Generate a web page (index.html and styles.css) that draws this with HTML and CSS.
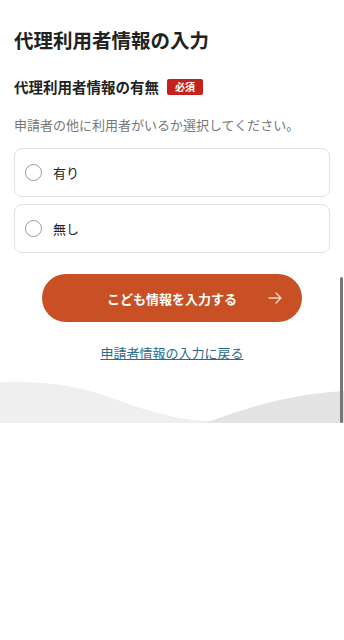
FILE: index.html
```html
<!DOCTYPE html>
<html lang="ja">
<head>
    <meta charset="UTF-8">
    <meta name="viewport" content="width=device-width, initial-scale=1.0">
    <title>代理利用者情報の入力</title>
    <link rel="stylesheet" href="styles.css">
</head>
<body>

    <main class="page">
        <h1 class="page-title">代理利用者情報の入力</h1>

        <section class="field">
            <h2 class="field-label">代理利用者情報の有無 <span class="badge">必須</span></h2>
            <p class="field-help">申請者の他に利用者がいるか選択してください。</p>

            <div class="options">
                <label class="option">
                    <input type="radio" name="proxy" value="yes">
                    <span class="radio"></span>
                    <span class="option-text">有り</span>
                </label>
                <label class="option">
                    <input type="radio" name="proxy" value="no">
                    <span class="radio"></span>
                    <span class="option-text">無し</span>
                </label>
            </div>
        </section>

        <div class="actions">
            <button class="primary">
                <span>こども情報を入力する</span>
                <svg class="arrow" width="14" height="12" viewBox="0 0 14 12" fill="none" stroke="currentColor" stroke-width="1.4" stroke-linecap="round" stroke-linejoin="round">
                    <path d="M1 6h12M8 1l5 5-5 5"/>
                </svg>
            </button>
            <a class="back-link" href="#">申請者情報の入力に戻る</a>
        </div>
    </main>

    <div class="wave">
        <svg width="344" height="42" viewBox="0 0 344 42" preserveAspectRatio="none">
            <path d="M0 1 C30 0 60 2 90 10 C130 22 160 38 210 40 L250 42 L0 42 Z" fill="#efefef"/>
            <path d="M205 42 C240 30 280 14 344 10 L344 42 Z" fill="#e3e3e3"/>
        </svg>
    </div>

    <div class="scrollbar"></div>

</body>
</html>
```

FILE: styles.css
```css
body {
    font-family: 'Noto Sans CJK JP', 'Noto Sans', sans-serif;
    margin: 0;
    padding: 0;
    background-color: #fff;
    color: #222;
}

.page {
    padding: 25px 14px 0;
}

.page-title {
    margin: 0;
    font-size: 19.5px;
    line-height: 30px;
    font-weight: bold;
    color: #222;
}

.field {
    margin-top: 20px;
}

.field-label {
    display: flex;
    align-items: center;
    gap: 8px;
    margin: 0;
    font-size: 14.5px;
    line-height: 24px;
    font-weight: bold;
}

.badge {
    background-color: #c5221f;
    color: #fff;
    font-size: 10px;
    line-height: 16px;
    padding: 0 8px;
    border-radius: 2px;
    font-weight: bold;
}

.field-help {
    margin: 16px 0 0;
    font-size: 13px;
    line-height: 20px;
    color: #777;
}

.options {
    display: flex;
    flex-direction: column;
    gap: 7px;
    margin-top: 13px;
}

.option {
    display: flex;
    align-items: center;
    height: 49px;
    box-sizing: border-box;
    padding: 0 10px;
    border: 1px solid #e2e2e2;
    border-radius: 8px;
    cursor: pointer;
}

.option input {
    display: none;
}

.radio {
    width: 17px;
    height: 17px;
    border: 1px solid #9a9a9a;
    border-radius: 50%;
    box-sizing: border-box;
    margin-right: 11px;
}

.option-text {
    font-size: 13px;
    color: #222;
}

.actions {
    display: flex;
    flex-direction: column;
    align-items: center;
    margin-top: 21px;
}

button.primary {
    position: relative;
    width: 260px;
    height: 48px;
    border: none;
    border-radius: 24px;
    background-color: #c94f25;
    color: #fff;
    font-family: inherit;
    font-size: 13px;
    font-weight: bold;
    cursor: pointer;
}

button.primary .arrow {
    position: absolute;
    right: 20px;
    top: 18px;
    color: #f6d6c9;
}

.back-link {
    margin-top: 21px;
    font-size: 13px;
    line-height: 20px;
    color: #2c6b88;
    text-decoration: underline;
}

.wave {
    margin-top: 18px;
    height: 42px;
    line-height: 0;
}

.scrollbar {
    position: absolute;
    right: 1px;
    top: 277px;
    width: 3px;
    height: 146px;
    background-color: #777;
    border-radius: 2px;
}
```
